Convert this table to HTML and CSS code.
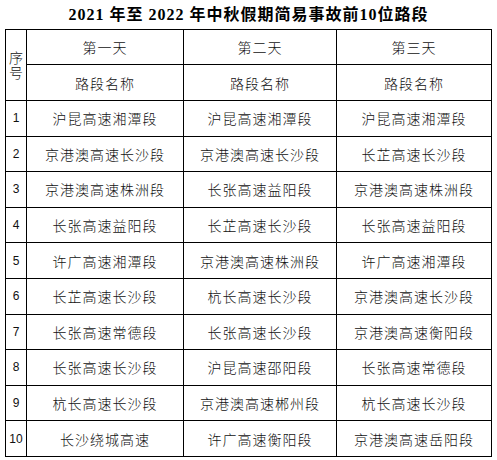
FILE: index.html
```html
<!DOCTYPE html>
<html lang="zh-CN">
<head>
<meta charset="utf-8">
<title>2021年至2022年中秋假期简易事故前10位路段</title>
<link rel="stylesheet" href="styles.css">
</head>
<body>
<div class="page">
  <h1 class="title">2021 年至 2022 年中秋假期简易事故前10位路段</h1>
  <table class="roads">
    <colgroup>
      <col class="c-no"><col class="c-day1"><col class="c-day2"><col class="c-day3">
    </colgroup>
    <thead>
      <tr class="h1">
        <th rowspan="2" class="no-head">序号</th>
        <th>第一天</th><th>第二天</th><th>第三天</th>
      </tr>
      <tr class="h2">
        <th>路段名称</th><th>路段名称</th><th>路段名称</th>
      </tr>
    </thead>
    <tbody>
      <tr><td class="no">1</td><td>沪昆高速湘潭段</td><td>沪昆高速湘潭段</td><td>沪昆高速湘潭段</td></tr>
      <tr><td class="no">2</td><td>京港澳高速长沙段</td><td>京港澳高速长沙段</td><td>长芷高速长沙段</td></tr>
      <tr><td class="no">3</td><td>京港澳高速株洲段</td><td>长张高速益阳段</td><td>京港澳高速株洲段</td></tr>
      <tr><td class="no">4</td><td>长张高速益阳段</td><td>长芷高速长沙段</td><td>长张高速益阳段</td></tr>
      <tr><td class="no">5</td><td>许广高速湘潭段</td><td>京港澳高速株洲段</td><td>许广高速湘潭段</td></tr>
      <tr><td class="no">6</td><td>长芷高速长沙段</td><td>杭长高速长沙段</td><td>京港澳高速长沙段</td></tr>
      <tr><td class="no">7</td><td>长张高速常德段</td><td>长张高速长沙段</td><td>京港澳高速衡阳段</td></tr>
      <tr><td class="no">8</td><td>长张高速长沙段</td><td>沪昆高速邵阳段</td><td>长张高速常德段</td></tr>
      <tr><td class="no">9</td><td>杭长高速长沙段</td><td>京港澳高速郴州段</td><td>杭长高速长沙段</td></tr>
      <tr><td class="no">10</td><td>长沙绕城高速</td><td>许广高速衡阳段</td><td>京港澳高速岳阳段</td></tr>
    </tbody>
  </table>
</div>
</body>
</html>
```
FILE: styles.css
```css
html, body {
  margin: 0;
  padding: 0;
  background: #fff;
}
.page {
  width: 497px;
  padding: 0 0 0 5px;
  box-sizing: border-box;
  font-family: "Noto Sans CJK SC", sans-serif;
  color: #000;
}
.title {
  margin: 0;
  height: 29px;
  line-height: 29px;
  font-size: 16px;
  letter-spacing: 1px;
  font-weight: 700;
  text-align: center;
  font-family: "Liberation Serif", "Noto Sans CJK SC", serif;
  padding-right: 5px;
}
.roads {
  border-collapse: collapse;
  table-layout: fixed;
  width: 487px;
}
.c-no { width: 21px; }
.c-day1 { width: 157px; }
.c-day2 { width: 153px; }
.c-day3 { width: 155px; }
.roads th, .roads td {
  border: 1px solid #000;
  padding: 0;
  font-size: 14px;
  font-weight: 300;
  color: #111;
  letter-spacing: 1px;
  text-align: center;
  vertical-align: middle;
  line-height: 16px;
}
.roads .h1 th { height: 34px; }
.roads .h2 th { height: 35px; }
.roads tbody td { height: 34.6px; }
.roads .no-head {
  line-height: 15px;
  letter-spacing: 0;
  word-break: break-all;
}
.roads td.no {
  font-family: "Liberation Sans", sans-serif;
  font-size: 12px;
  letter-spacing: 0;
}
```
